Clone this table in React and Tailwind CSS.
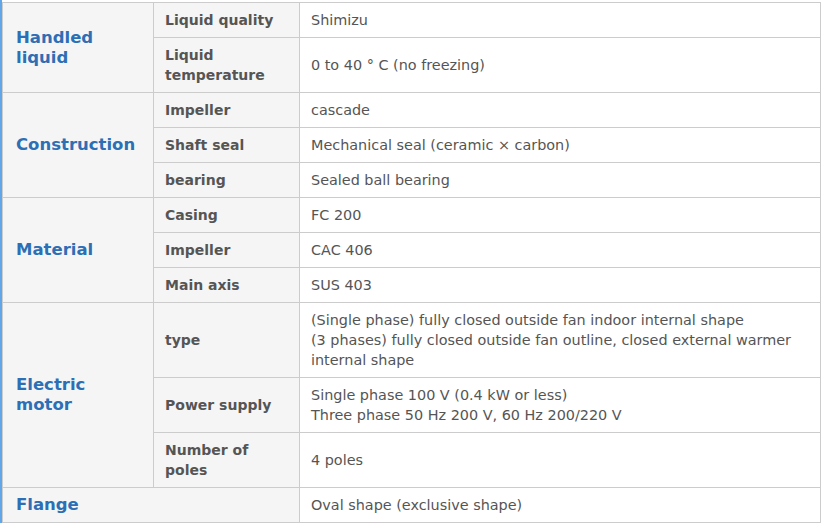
const sections = [
  {
    title: 'Handled liquid',
    rows: [
      ['Liquid quality', ['Shimizu']],
      ['Liquid temperature', ['0 to 40 ° C (no freezing)']],
    ],
  },
  {
    title: 'Construction',
    rows: [
      ['Impeller', ['cascade']],
      ['Shaft seal', ['Mechanical seal (ceramic × carbon)']],
      ['bearing', ['Sealed ball bearing']],
    ],
  },
  {
    title: 'Material',
    rows: [
      ['Casing', ['FC 200']],
      ['Impeller', ['CAC 406']],
      ['Main axis', ['SUS 403']],
    ],
  },
  {
    title: 'Electric motor',
    rows: [
      [
        'type',
        [
          '(Single phase) fully closed outside fan indoor internal shape',
          '(3 phases) fully closed outside fan outline, closed external warmer internal shape',
        ],
      ],
      ['Power supply', ['Single phase 100 V (0.4 kW or less)', 'Three phase 50 Hz 200 V, 60 Hz 200/220 V']],
      ['Number of poles', ['4 poles']],
    ],
  },
];

const head = 'bg-[#f5f5f5] border border-[#cccccc] pl-[13px] pr-3 py-[7px] text-left align-middle text-[16.5px] leading-[20px] font-bold text-[#2d6fb5]';
const label = 'bg-[#f5f5f5] border border-[#cccccc] pl-[11px] pr-2 py-[7px] text-left align-middle text-[14px] leading-[20px] font-bold text-[#555555]';
const value = 'bg-white border border-[#cccccc] pl-[11px] pr-2 py-[7px] align-middle text-[14.4px] leading-[20px] text-[#555555]';

export default function App() {
  return (
    <div className="min-h-screen bg-white" style={{ fontFamily: '"DejaVu Sans", Verdana, sans-serif' }}>
      <div className="w-[821px] border-l-2 border-[#62a6ea] pt-[2px]">
        <table className="w-[819px] table-fixed border-collapse">
          <colgroup>
            <col className="w-[151px]" />
            <col className="w-[146px]" />
            <col />
          </colgroup>
          <tbody>
            {sections.map(sec =>
              sec.rows.map((row, i) => (
                <tr key={sec.title + i}>
                  {i === 0 && (
                    <th rowSpan={sec.rows.length} className={head}>
                      {sec.title}
                    </th>
                  )}
                  <th className={label}>{row[0]}</th>
                  <td className={value}>
                    {row[1].map((line, j) => (
                      <div key={j}>{line}</div>
                    ))}
                  </td>
                </tr>
              ))
            )}
            <tr>
              <th colSpan={2} className={head}>Flange</th>
              <td className={value}>Oval shape (exclusive shape)</td>
            </tr>
          </tbody>
        </table>
      </div>
    </div>
  );
}
